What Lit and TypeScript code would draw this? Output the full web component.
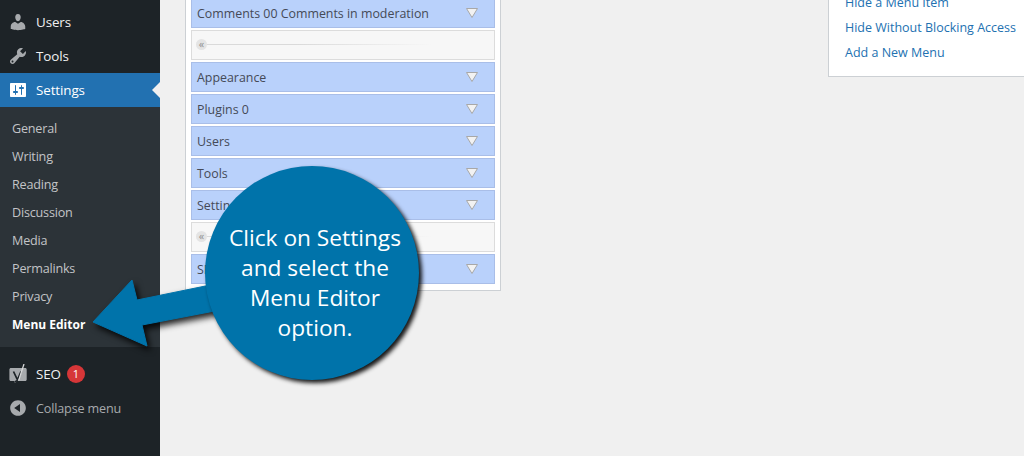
import { LitElement, html, css, svg } from "lit";
import { customElement } from "lit/decorators.js";

const icons: Record<string, ReturnType<typeof svg>> = {
  users: svg`<path d="M10 9.25c-2.27 0-2.73-3.44-2.73-3.44C7 4.02 7.82 2 9.97 2c2.16 0 2.98 2.02 2.71 3.81 0 0-.41 3.44-2.68 3.44zm0 2.57L12.72 10c2.39 0 4.52 2.33 4.52 4.53v2.49s-3.65 1.13-7.24 1.13c-3.65 0-7.24-1.13-7.24-1.13v-2.49c0-2.25 1.94-4.48 4.47-4.48z"/>`,
  tools: svg`<path d="M16.68 9.77c-1.34 1.34-3.3 1.67-4.95.99l-5.41 6.52c-.99.99-2.59.99-3.58 0s-.99-2.59 0-3.57l6.52-5.42c-.68-1.65-.35-3.61.99-4.95 1.28-1.28 3.12-1.62 4.72-1.06l-2.89 2.89 2.82 2.82 2.86-2.87c.53 1.58.18 3.39-1.08 4.65zM3.81 16.21c.4.39 1.04.39 1.43 0 .4-.4.4-1.04 0-1.43-.39-.4-1.03-.4-1.43 0-.39.39-.39 1.03 0 1.43z"/>`,
  settings: svg`<path d="M18 16V4c0-.55-.45-1-1-1H3c-.55 0-1 .45-1 1v12c0 .55.45 1 1 1h14c.55 0 1-.45 1-1zM8 11h1c.55 0 1 .45 1 1s-.45 1-1 1H8v1.5c0 .28-.22.5-.5.5s-.5-.22-.5-.5V13H6c-.55 0-1-.45-1-1s.45-1 1-1h1V5.5c0-.28.22-.5.5-.5s.5.22.5.5V11zm5-2h-1c-.55 0-1-.45-1-1s.45-1 1-1h1V5.5c0-.28.22-.5.5-.5s.5.22.5.5V7h1c.55 0 1 .45 1 1s-.45 1-1 1h-1v5.5c0 .28-.22.5-.5.5s-.5-.22-.5-.5V9z"/>`,
  collapse: svg`<path d="M10 2.16c4.33 0 7.84 3.51 7.84 7.84s-3.51 7.84-7.84 7.84S2.16 14.33 2.16 10 5.71 2.16 10 2.16zm2 11.72V6.12L6.18 9.97z"/>`,
  seo: svg`<path d="M3 4h14.3c.8 0 1.4.7 1.4 1.5v10c0 .8-.6 1.5-1.4 1.5H9l-2.2 2-.2-2H3c-.9 0-1.6-.7-1.6-1.5v-10C1.4 4.7 2.1 4 3 4z"/>
    <path d="M5.5 7.5l3.6 7.6M13 7.5L9.4 16q-.6 1.5-2.4 1.5" fill="none" stroke="#1d2327" stroke-width="1.7"/>
    <path d="M16 0L10.6 16.6" fill="none" stroke="#d8d9da" stroke-width="1.3"/>`,
};

const subItems = ["General", "Writing", "Reading", "Discussion", "Media", "Permalinks", "Privacy"];
const rows: { label: string; kind?: string }[] = [
  { label: "Comments 00 Comments in moderation" },
  { label: "", kind: "sep" },
  { label: "Appearance" },
  { label: "Plugins 0" },
  { label: "Users" },
  { label: "Tools" },
  { label: "Settings" },
  { label: "", kind: "sep" },
  { label: "SEO" },
];

@customElement("app-root")
export class AppRoot extends LitElement {
  static styles = css`
    :host {
      display: block;
      width: 1024px;
      height: 456px;
      overflow: hidden;
      position: relative;
      background: #f0f0f0;
      font-family: "Open Sans", "Noto Sans", sans-serif;
      font-size: 13px;
    }
    .page { display: flex; height: 456px; }
    .sidebar {
      width: 160px;
      flex: none;
      background: #1d2327;
      padding-top: 5px;
      box-sizing: border-box;
    }
    .item {
      height: 34px;
      display: flex;
      align-items: center;
      padding-left: 36px;
      position: relative;
      color: #f0f0f1;
      font-size: 13.4px;
      letter-spacing: -0.1px;
    }
    .item svg {
      position: absolute;
      left: 8px;
      top: 7px;
      width: 20px;
      height: 20px;
      fill: #a7aaad;
    }
    .item.current { background: #2271b1; color: #fff; }
    .item.current svg { fill: #fff; }
    .item.current::after {
      content: "";
      position: absolute;
      right: 0;
      top: 9px;
      border: 8px solid transparent;
      border-right-color: #f0f0f0;
      border-left-width: 0;
    }
    .item.muted { color: #a7aaad; font-size: 12.6px; letter-spacing: -0.15px; }
    .sub {
      background: #2c3338;
      padding: 8px 0 8px;
      margin-bottom: 10px;
    }
    .sub div {
      height: 28px;
      line-height: 28px;
      padding-left: 12px;
      color: #c3c4c7;
      font-size: 12.6px;
      letter-spacing: -0.2px;
    }
    .sub .on { color: #fff; font-weight: 700; font-size: 12px; letter-spacing: 0; }
    .badge {
      width: 18px;
      height: 18px;
      border-radius: 50%;
      background: #d63638;
      color: #fff;
      font-size: 11px;
      line-height: 18px;
      text-align: center;
      margin-left: 6px;
      letter-spacing: 0;
    }
    .main {
      flex: 1;
      display: flex;
      justify-content: space-between;
      align-items: flex-start;
      padding-left: 25px;
      min-width: 0;
    }
    .card {
      background: #fff;
      border: 1px solid #ccd0d4;
      border-top: 0;
      box-sizing: border-box;
    }
    .menu {
      width: 316px;
      margin-top: -2px;
      padding: 0 5px 6px;
      display: flex;
      flex-direction: column;
      gap: 2px;
    }
    .row {
      height: 30px;
      box-sizing: border-box;
      border: 1px solid #a9bee8;
      background: #b9d1fb;
      color: #454a57;
      display: flex;
      align-items: center;
      justify-content: space-between;
      padding: 0 15px 0 5px;
      font-size: 12.4px;
    }
    .row svg { width: 14px; height: 12px; display: block; }
    .sep {
      height: 30px;
      box-sizing: border-box;
      border: 1px solid #dcdcdc;
      background: #f7f7f7;
      display: flex;
      align-items: center;
      padding: 0 0 2px 4px;
    }
    .knob {
      width: 11px;
      height: 11px;
      flex: none;
      border-radius: 50%;
      background: #e4e4e4;
      color: #8f8f8f;
      font-size: 11px;
      line-height: 9px;
      text-align: center;
    }
    .line {
      width: 225px;
      height: 1px;
      background: linear-gradient(to right, #dadada 40%, #f7f7f7);
    }
    .links {
      width: 196px;
      height: 77px;
      border-right: 0;
      padding: 0 0 14px 16px;
      overflow: hidden;
      display: flex;
      flex-direction: column;
      justify-content: flex-end;
      gap: 7px;
      color: #2271b1;
      font-size: 12.5px;
    }
    .links div { line-height: 18px; white-space: nowrap; }
    .arrow {
      position: absolute;
      left: 0;
      top: 0;
      width: 1024px;
      height: 456px;
      filter: drop-shadow(3px 4px 3px rgba(0, 0, 0, 0.85));
    }
    .bubble {
      position: absolute;
      left: 205px;
      top: 166px;
      width: 214px;
      height: 214px;
      border-radius: 50%;
      background: #0073aa;
      box-shadow: 3px 3px 4px rgba(0, 0, 0, 0.9);
      color: #fff;
      font-size: 22.7px;
      line-height: 30px;
      text-align: center;
      display: flex;
      align-items: center;
      justify-content: center;
      padding: 20px 0 0 6px;
      box-sizing: border-box;
    }
  `;

  private icon(name: string) {
    return html`<svg viewBox="0 0 20 20">${icons[name]}</svg>`;
  }

  render() {
    return html`
      <div class="page">
        <nav class="sidebar">
          <div class="item">${this.icon("users")}Users</div>
          <div class="item">${this.icon("tools")}Tools</div>
          <div class="item current">${this.icon("settings")}Settings</div>
          <div class="sub">
            ${subItems.map((s) => html`<div>${s}</div>`)}
            <div class="on">Menu Editor</div>
          </div>
          <div class="item">${this.icon("seo")}SEO<span class="badge">1</span></div>
          <div class="item muted">${this.icon("collapse")}Collapse menu</div>
        </nav>
        <main class="main">
          <section class="card menu">
            ${rows.map((r) =>
              r.kind === "sep"
                ? html`<div class="sep"><span class="knob">«</span><span class="line"></span></div>`
                : html`<div class="row">
                    <span>${r.label}</span>
                    <svg viewBox="0 0 14 12"><path d="M1.5 1.5h11L7 10.5z" fill="#f2f2f2" stroke="#a8a8a8" stroke-width="1"/></svg>
                  </div>`
            )}
          </section>
          <section class="card links">
            <div>Hide a Menu Item</div>
            <div>Hide Without Blocking Access</div>
            <div>Add a New Menu</div>
          </section>
        </main>
      </div>
      <svg class="arrow" viewBox="0 0 1024 456">
        <path d="M93 322L132 280L137 300L225 282L225 309L142 325L147 346Z" fill="#0073aa" stroke="#0073aa" stroke-width="1" stroke-linejoin="round"/>
      </svg>
      <div class="bubble"><div>Click on Settings<br />and select the<br />Menu Editor<br />option.</div></div>
    `;
  }
}
